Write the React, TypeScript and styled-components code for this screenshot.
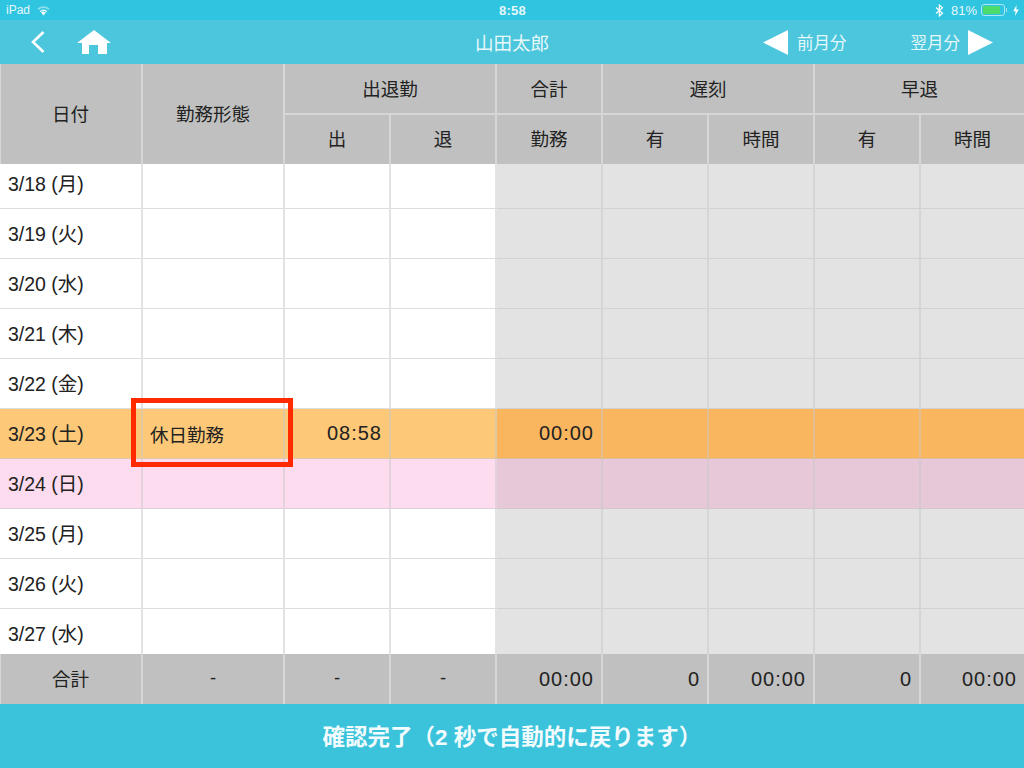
import styled, { createGlobalStyle } from "styled-components";

const COLUMNS = "143px 142px 106px 106px 106px 106px 106px 106px 105px";

const rows = [
  { date: "3/18 (月)" },
  { date: "3/19 (火)" },
  { date: "3/20 (水)" },
  { date: "3/21 (木)" },
  { date: "3/22 (金)" },
  { date: "3/23 (土)", kind: "today", work: "休日勤務", start: "08:58", total: "00:00" },
  { date: "3/24 (日)", kind: "holiday" },
  { date: "3/25 (月)" },
  { date: "3/26 (火)" },
  { date: "3/27 (水)" },
] as { date: string; kind?: RowKind; work?: string; start?: string; total?: string }[];

type RowKind = "today" | "holiday";

export default function App() {
  return (
    <Page>
      <GlobalStyle />
      <StatusBar>
        <StatusSide>
          <span>iPad</span>
          <svg width="15" height="11" viewBox="0 0 15 11">
            <path d="M7.5 10.5 L5 7.6 A3.8 3.8 0 0 1 10 7.6 Z" fill="#fff" />
            <path d="M3.6 6.2 A6 6 0 0 1 11.4 6.2 L10.4 7 A4.6 4.6 0 0 0 4.6 7 Z" fill="#fff" />
            <path d="M1.4 3.6 A9 9 0 0 1 13.6 3.6 L12.4 4.9 A7.2 7.2 0 0 0 2.6 4.9 Z" fill="#fff" opacity="0.45" />
          </svg>
        </StatusSide>
        <Clock>8:58</Clock>
        <StatusSide $right>
          <svg width="9" height="13" viewBox="0 0 9 13" fill="none" stroke="#fff" strokeWidth="1.2">
            <path d="M1 3.5 L7.5 9.3 L4.4 12 V1 L7.5 3.7 L1 9.5" />
          </svg>
          <Percent>81%</Percent>
          <Battery>
            <BatteryLevel />
          </Battery>
          <svg width="6" height="11" viewBox="0 0 6 11">
            <path d="M3.6 0 L0.2 6.2 H2.6 L2 11 L5.8 4.4 H3.3 Z" fill="#fff" />
          </svg>
        </StatusSide>
      </StatusBar>

      <NavBar>
        <NavLeft>
          <svg width="14" height="22" viewBox="0 0 14 22" fill="none">
            <path d="M12.5 1 L2 11 L12.5 21" stroke="#fff" strokeWidth="2.6" />
          </svg>
          <svg width="34" height="24" viewBox="0 0 34 24">
            <path d="M17 0 L34 13 H30 V24 H21 V15 H12 V24 H5 V13 H0 Z" fill="#fff" />
          </svg>
        </NavLeft>
        <NavTitle>山田太郎</NavTitle>
        <NavRight>
          <PrevLink>
            <svg width="25" height="25" viewBox="0 0 25 25">
              <path d="M0 12.5 L25 0 V25 Z" fill="#fff" />
            </svg>
            前月分
          </PrevLink>
          <NextLink>
            翌月分
            <svg width="25" height="25" viewBox="0 0 25 25">
              <path d="M25 12.5 L0 0 V25 Z" fill="#fff" />
            </svg>
          </NextLink>
        </NavRight>
      </NavBar>

      <TableHead>
        <HeadCell $tall>日付</HeadCell>
        <HeadCell $tall>勤務形態</HeadCell>
        <HeadCell $span={2} $upper>
          出退勤
        </HeadCell>
        <HeadCell $upper>合計</HeadCell>
        <HeadCell $span={2} $upper>
          遅刻
        </HeadCell>
        <HeadCell $span={2} $upper>
          早退
        </HeadCell>
        <LowerHeadCell>出</LowerHeadCell>
        <LowerHeadCell>退</LowerHeadCell>
        <LowerHeadCell>勤務</LowerHeadCell>
        <LowerHeadCell>有</LowerHeadCell>
        <LowerHeadCell>時間</LowerHeadCell>
        <LowerHeadCell>有</LowerHeadCell>
        <LowerHeadCell>時間</LowerHeadCell>
      </TableHead>

      <TableBody>
        <ScrolledRows>
          {rows.map((row) => (
            <Row key={row.date}>
              <DateCell $kind={row.kind}>{row.date}</DateCell>
              <Cell $kind={row.kind}>{row.work}</Cell>
              <TimeCell $kind={row.kind}>{row.start}</TimeCell>
              <Cell $kind={row.kind} />
              <TimeCell $kind={row.kind} $locked>
                {row.total}
              </TimeCell>
              <Cell $kind={row.kind} $locked />
              <Cell $kind={row.kind} $locked />
              <Cell $kind={row.kind} $locked />
              <Cell $kind={row.kind} $locked />
            </Row>
          ))}
        </ScrolledRows>
      </TableBody>

      <TotalRow>
        <TotalCell>合計</TotalCell>
        <TotalCell>-</TotalCell>
        <TotalCell>-</TotalCell>
        <TotalCell>-</TotalCell>
        <TotalTime>00:00</TotalTime>
        <TotalTime>0</TotalTime>
        <TotalTime>00:00</TotalTime>
        <TotalTime>0</TotalTime>
        <TotalTime>00:00</TotalTime>
      </TotalRow>

      <ConfirmBar>確認完了（2 秒で自動的に戻ります）</ConfirmBar>
      <Highlight />
    </Page>
  );
}

const GlobalStyle = createGlobalStyle`
  html, body {
    margin: 0;
    padding: 0;
    background: #fff;
  }
  * {
    box-sizing: border-box;
  }
`;

const Page = styled.div`
  position: relative;
  width: 1024px;
  height: 768px;
  overflow: hidden;
  font-family: "Liberation Sans", "Noto Sans CJK JP", sans-serif;
  font-size: 18.5px;
  color: #222;
`;

const StatusBar = styled.div`
  height: 20px;
  padding: 0 5px 0 6px;
  display: grid;
  grid-template-columns: 1fr auto 1fr;
  align-items: center;
  background: #2fc4df;
  color: #e4f7fb;
  font-size: 12px;
`;

const StatusSide = styled.div<{ $right?: boolean }>`
  display: flex;
  align-items: center;
  gap: ${(p) => (p.$right ? "4px" : "6px")};
  justify-content: ${(p) => (p.$right ? "flex-end" : "flex-start")};
`;

const Percent = styled.span`
  margin-left: 3px;
  font-size: 13px;
`;

const Clock = styled.div`
  font-size: 13px;
  font-weight: 700;
  letter-spacing: 0.3px;
`;

const Battery = styled.div`
  position: relative;
  width: 24px;
  height: 12px;
  padding: 1px;
  margin-right: 4px;
  border: 1px solid #a9e8f3;
  border-radius: 3px;
  &::after {
    content: "";
    position: absolute;
    right: -3px;
    top: 3px;
    width: 1px;
    height: 4px;
    background: #a9e8f3;
  }
`;

const BatteryLevel = styled.div`
  width: 84%;
  height: 100%;
  border-radius: 1px;
  background: #4cdc6c;
`;

const NavBar = styled.div`
  height: 44px;
  padding: 0 31px;
  display: grid;
  grid-template-columns: 1fr auto 1fr;
  align-items: center;
  background: #4bc6dc;
  color: #e6f8fb;
  font-size: 16.5px;
`;

const NavLeft = styled.div`
  display: flex;
  align-items: center;
  gap: 32px;
  svg {
    display: block;
  }
`;

const NavTitle = styled.div`
  font-size: 18.5px;
`;

const NavRight = styled.div`
  display: flex;
  justify-content: flex-end;
  gap: 64px;
`;

const PrevLink = styled.div`
  display: flex;
  align-items: center;
  gap: 9px;
`;

const NextLink = styled(PrevLink)`
  gap: 8px;
`;

const TableHead = styled.div`
  height: 100px;
  display: grid;
  grid-template-columns: ${COLUMNS};
  grid-template-rows: 51px 49px;
  background: #bfc0bf;
  box-shadow: inset 1px 0 #d6d6d6;
`;

const HeadCell = styled.div<{ $tall?: boolean; $span?: number; $upper?: boolean }>`
  grid-row: ${(p) => (p.$tall ? "span 2" : "auto")};
  grid-column: ${(p) => (p.$span ? `span ${p.$span}` : "auto")};
  padding-bottom: 2px;
  display: flex;
  align-items: center;
  justify-content: center;
  border-right: 2px solid #d6d6d6;
  border-bottom: ${(p) => (p.$upper ? "2px solid #d6d6d6" : "0")};
`;

const LowerHeadCell = styled(HeadCell)`
  padding-bottom: 4px;
`;

const TableBody = styled.div`
  height: 490px;
  overflow: hidden;
`;

const ScrolledRows = styled.div`
  margin-top: -5px;
`;

const Row = styled.div`
  height: 50px;
  display: grid;
  grid-template-columns: ${COLUMNS};
`;

const cellBackground = (kind?: RowKind, locked?: boolean) => {
  if (kind === "today") return locked ? "#fab55f" : "#fdc877";
  if (kind === "holiday") return locked ? "#e6c8d9" : "#fedcef";
  return locked ? "#e3e3e3" : "#fff";
};

const Cell = styled.div<{ $kind?: RowKind; $locked?: boolean }>`
  display: flex;
  align-items: center;
  padding: 0 7px;
  background: ${(p) => cellBackground(p.$kind, p.$locked)};
  border-right: 2px solid rgba(200, 200, 200, 0.5);
  border-bottom: 1px solid rgba(200, 200, 200, 0.6);
`;

const DateCell = styled(Cell)`
  padding: 0 8px 3px;
  font-size: 19.5px;
`;

const TimeCell = styled(Cell)`
  justify-content: flex-end;
  font-size: 20px;
  letter-spacing: 1px;
`;

const TotalRow = styled.div`
  height: 50px;
  display: grid;
  grid-template-columns: ${COLUMNS};
  background: #bfc0bf;
  box-shadow: inset 1px 0 #d6d6d6;
`;

const TotalCell = styled.div`
  display: flex;
  align-items: center;
  justify-content: center;
  padding: 0 7px 2px;
  border-right: 2px solid #d6d6d6;
`;

const TotalTime = styled(TotalCell)`
  justify-content: flex-end;
  padding-bottom: 0;
  font-size: 20px;
  letter-spacing: 1px;
`;

const ConfirmBar = styled.div`
  height: 64px;
  padding-bottom: 3px;
  display: flex;
  align-items: center;
  justify-content: center;
  background: #3bc3dc;
  color: #f2fbfd;
  font-size: 22.5px;
  font-weight: 700;
`;

const Highlight = styled.div`
  position: absolute;
  left: 131px;
  top: 398px;
  width: 162px;
  height: 69px;
  border: 5px solid #ff2a00;
`;
